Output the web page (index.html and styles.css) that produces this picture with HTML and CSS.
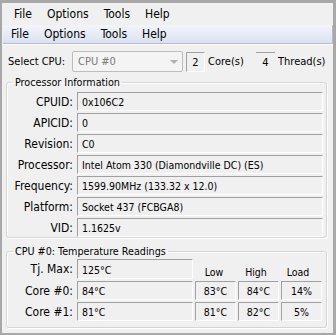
FILE: index.html
```html
<!DOCTYPE html>
<html lang="en">
<head>
  <meta charset="UTF-8">
  <title>Core Temp</title>
  <link rel="stylesheet" href="styles.css">
</head>
<body>
  <div class="window">
    <!-- menu antigo -->
    <div class="menubar menubar-old">
      <span>File</span><span>Options</span><span>Tools</span><span>Help</span>
    </div>
    <!-- menu novo -->
    <div class="menubar menubar-new">
      <span>File</span><span>Options</span><span>Tools</span><span>Help</span>
    </div>

    <div class="content">
      <div class="cpu-row">
        <span class="cpu-label">Select CPU:</span>
        <div class="combo">CPU #0<span class="arrow"></span></div>
        <div class="count sunken">2</div>
        <span class="count-label">Core(s)</span>
        <div class="count flat">4</div>
        <span class="count-label">Thread(s)</span>
      </div>

      <fieldset class="group info">
        <legend>Processor Information</legend>
        <div class="row"><label>CPUID:</label><div class="field">0x106C2</div></div>
        <div class="row"><label>APICID:</label><div class="field">0</div></div>
        <div class="row"><label>Revision:</label><div class="field">C0</div></div>
        <div class="row"><label>Processor:</label><div class="field">Intel Atom 330 (Diamondville DC) (ES)</div></div>
        <div class="row"><label>Frequency:</label><div class="field">1599.90MHz (133.32 x 12.0)</div></div>
        <div class="row"><label>Platform:</label><div class="field">Socket 437 (FCBGA8)</div></div>
        <div class="row"><label>VID:</label><div class="field">1.1625v</div></div>
      </fieldset>

      <fieldset class="group temps">
        <legend>CPU #0: Temperature Readings</legend>
        <div class="row first">
          <label>Tj. Max:</label><div class="field short tall">125°C</div>
          <div class="head">Low</div><div class="head">High</div><div class="head">Load</div>
        </div>
        <div class="row">
          <label>Core #0:</label><div class="field short">84°C</div>
          <div class="cell">83°C</div><div class="cell">84°C</div><div class="cell">14%</div>
        </div>
        <div class="row">
          <label>Core #1:</label><div class="field short">81°C</div>
          <div class="cell">81°C</div><div class="cell">82°C</div><div class="cell">5%</div>
        </div>
      </fieldset>
    </div>
  </div>
</body>
</html>
```

FILE: styles.css
```css
body {
  margin: 0;
  font-family: "DejaVu Sans Condensed", "DejaVu Sans", sans-serif;
  font-size: 11px;
  color: #000;
  background-color: #f0f0f0;
}
.window {
  box-sizing: border-box;
  width: 336px;
  height: 335px;
  border-top: 3px solid #a8a8a8;
  border-left: 2px solid #a8a8a8;
  border-right: 3px solid #a8a8a8;
  border-bottom: 2px solid #a8a8a8;
  background-color: #f0f0f0;
  overflow: hidden;
}
.menubar {
  display: flex;
  align-items: center;
}
.menubar span {
  padding: 0 5px;
  font-size: 12px;
}
.menubar-old {
  height: 22px;
  padding-left: 7px;
  gap: 5px;
}
.menubar-new {
  height: 18px;
  margin-left: 1px;
  padding-left: 3px;
  gap: 5px;
  background: linear-gradient(#f3f5fb, #dbe1f2);
  border-bottom: 1px solid #b6bcc8;
  border-right: 1px solid #b6bcc8;
}
.content {
  border-top: 1px solid #fff;
  padding: 6px 0 0 4px;
}
.cpu-row {
  display: flex;
  align-items: center;
  height: 21px;
}
.cpu-label {
  width: 64px;
  padding-left: 2px;
}
.combo {
  position: relative;
  box-sizing: border-box;
  width: 111px;
  height: 21px;
  border: 1px solid #bdbdbd;
  border-radius: 2px;
  color: #7a7a7a;
  padding: 3px 0 0 5px;
  background-color: #f4f4f4;
}
.combo .arrow {
  position: absolute;
  right: 4px;
  top: 8px;
  border-left: 4px solid transparent;
  border-right: 4px solid transparent;
  border-top: 4px solid #b0b0b0;
}
.count {
  box-sizing: border-box;
  width: 19px;
  height: 20px;
  margin-left: 3px;
  text-align: center;
  padding-top: 3px;
}
.sunken {
  border-top: 1px solid #a0a0a0;
  border-left: 1px solid #a0a0a0;
  border-right: 1px solid #fff;
  border-bottom: 1px solid #fff;
}
.flat {
  border-top: 1px solid #a0a0a0;
  margin-left: 0;
}
.count-label {
  padding-left: 3px;
  width: 48px;
}
.group {
  box-sizing: border-box;
  width: 321px;
  margin: 0;
  border: 1px solid #d5d5d5;
  border-radius: 3px;
  box-shadow: inset 1px 1px #fff, 1px 1px #fff;
  padding: 0 3px 0 0;
}
.group legend {
  margin-left: 6px;
  padding: 0 2px;
  font-size: 10.7px;
}
.info {
  margin-top: 4px;
  height: 162px;
}
.temps {
  margin-top: 7px;
  height: 83px;
}
.row {
  display: flex;
  align-items: center;
  margin-top: 2px;
}
.info .row:first-of-type {
  margin-top: 3px;
}
.row label {
  width: 66px;
  text-align: right;
  padding-right: 4px;
  font-size: 12px;
}
.field, .cell {
  box-sizing: border-box;
  height: 19px;
  line-height: 16px;
  padding: 1px 0 0 4px;
  border-top: 1px solid #a0a0a0;
  border-left: 1px solid #a0a0a0;
  border-right: 1px solid #fff;
  border-bottom: 1px solid #fff;
  font-size: 10.5px;
  white-space: nowrap;
}
.field {
  flex: 1;
}
.field.short {
  flex: none;
  width: 116px;
}
.field.tall {
  height: 20px;
  padding-top: 2px;
}
.head {
  width: 42px;
  padding-top: 5px;
  text-align: center;
  font-size: 10.5px;
}
.cell {
  width: 41px;
  margin-left: 2px;
  padding-left: 0;
  text-align: center;
}
.temps .row.first {
  margin-top: 1px;
}
```
